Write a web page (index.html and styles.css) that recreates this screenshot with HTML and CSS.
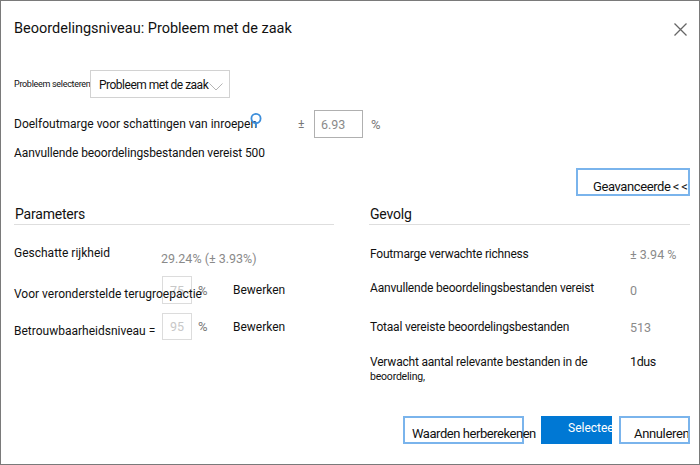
FILE: index.html
```html
<!DOCTYPE html>
<html lang="nl">
<head>
<meta charset="utf-8">
<title>Beoordelingsniveau</title>
<link rel="stylesheet" href="styles.css">
</head>
<body>
<div class="dialog">
  <div class="header">
    <h1 class="title">Beoordelingsniveau: Probleem met de zaak</h1>
    <button class="close" aria-label="Sluiten">
      <svg width="13" height="13" viewBox="0 0 13 13"><path d="M0.5 0.5 L12.5 12.5 M12.5 0.5 L0.5 12.5" stroke="#666" stroke-width="1.3" fill="none"/></svg>
    </button>
  </div>

  <div class="select-row">
    <span class="tiny">Probleem selecteren</span>
    <div class="dropdown">
      <span class="dd-text">Probleem met de zaak</span>
      <svg class="chev" width="14" height="8" viewBox="0 0 14 8"><path d="M0.5 0.5 L7 7 L13.5 0.5" stroke="#b5b5b5" stroke-width="1" fill="none"/></svg>
    </div>
  </div>

  <div class="margin-row">
    <div class="margin-label">
      <span>Doelfoutmarge voor schattingen van inroepen</span>
      <svg class="knob" width="14" height="18" viewBox="0 0 14 18"><circle cx="7" cy="6.5" r="4.6" stroke="#3c8edb" stroke-width="1.8" fill="none"/><path d="M7 11.5 L7 15.5" stroke="#3c8edb" stroke-width="1.8"/></svg>
    </div>
    <span class="pm">±</span>
    <div class="box box-wide">6.93</div>
    <span class="pct">%</span>
  </div>

  <div class="info-row">Aanvullende beoordelingsbestanden vereist 500</div>

  <div class="adv-row">
    <button class="btn-outline adv">Geavanceerde &lt; &lt;</button>
  </div>

  <div class="columns">
    <section class="col">
      <h2 class="col-head">Parameters</h2>
      <div class="prow prow-1">
        <span class="plabel">Geschatte rijkheid</span>
        <span class="pvalue">29.24% (± 3.93%)</span>
      </div>
      <div class="prow prow-2">
        <span class="plabel lift">Voor veronderstelde terugroepactie</span>
        <div class="box box-small">75</div>
        <span class="ppct">%</span>
        <span class="edit">Bewerken</span>
      </div>
      <div class="prow prow-3">
        <span class="plabel lift">Betrouwbaarheidsniveau =</span>
        <div class="box box-small">95</div>
        <span class="ppct">%</span>
        <span class="edit">Bewerken</span>
      </div>
    </section>

    <section class="col">
      <h2 class="col-head">Gevolg</h2>
      <div class="rrow rrow-1">
        <span class="rlabel">Foutmarge verwachte richness</span>
        <span class="rvalue">± 3.94 %</span>
      </div>
      <div class="rrow rrow-2">
        <span class="rlabel">Aanvullende beoordelingsbestanden vereist</span>
        <span class="rvalue low">0</span>
      </div>
      <div class="rrow rrow-3">
        <span class="rlabel">Totaal vereiste beoordelingsbestanden</span>
        <span class="rvalue">513</span>
      </div>
      <div class="rrow rrow-4">
        <div class="rlabel">
          <div>Verwacht aantal relevante bestanden in de</div>
          <div class="small">beoordeling,</div>
        </div>
        <span class="rvalue dark">1dus</span>
      </div>
    </section>
  </div>

  <div class="footer">
    <button class="btn-outline recalc">Waarden herberekenen</button>
    <button class="btn-primary">Selecteer</button>
    <button class="btn-outline cancel">Annuleren</button>
  </div>
</div>
</body>
</html>
```

FILE: styles.css
```css
html, body {
  margin: 0;
  padding: 0;
  background: #fff;
}

.dialog {
  box-sizing: border-box;
  width: 700px;
  height: 465px;
  border: 1px solid #7a7a7a;
  background: #fff;
  font-family: Roboto, "Open Sans", sans-serif;
  font-size: 12px;
  color: #111;
  padding: 0 9px 0 13px;
  display: flex;
  flex-direction: column;
  overflow: hidden;
}

button {
  font-family: inherit;
  margin: 0;
  background: #fff;
  cursor: pointer;
}

.header {
  display: flex;
  align-items: center;
  justify-content: space-between;
  height: 20px;
  margin-top: 18px;
}

.title {
  margin: 0;
  font-size: 14.5px;
  font-weight: 400;
  line-height: 20px;
  color: #111;
}

.close {
  border: none;
  padding: 0;
  width: 13px;
  height: 13px;
  margin-right: 3px;
  display: flex;
}

.select-row {
  display: flex;
  align-items: center;
  margin-top: 31px;
  height: 28px;
}

.tiny {
  font-size: 9px;
  letter-spacing: -0.3px;
  width: 76px;
  white-space: nowrap;
  color: #111;
}

.dropdown {
  box-sizing: border-box;
  width: 140px;
  height: 28px;
  border: 1px solid #d2d2d2;
  display: flex;
  align-items: center;
  padding-left: 8px;
}

.dd-text {
  font-size: 12px;
  letter-spacing: -0.5px;
  white-space: nowrap;
  margin-top: 1px;
}

.chev {
  margin-left: 1px;
  margin-top: 5px;
  flex: 0 0 auto;
}

.margin-row {
  display: flex;
  align-items: center;
  margin-top: 12px;
  height: 28px;
}

.margin-label {
  position: relative;
  width: 284px;
  white-space: nowrap;
}

.knob {
  position: absolute;
  left: 235px;
  top: -5px;
}

.pm {
  width: 16px;
  color: #777;
}

.box {
  box-sizing: border-box;
  border: 1px solid #c4c4c4;
  color: #999;
  display: flex;
  align-items: center;
  background: #fff;
}

.box-wide {
  width: 49px;
  height: 28px;
  padding-left: 6px;
  font-size: 12.5px;
  color: #8a8a8a;
  border-color: #b0b0b0;
}

.pct {
  margin-left: 8px;
  color: #777;
  font-size: 13px;
}

.info-row {
  margin-top: 5px;
  height: 20px;
  line-height: 20px;
  letter-spacing: -0.1px;
}

.adv-row {
  display: flex;
  justify-content: flex-end;
  margin-top: 5px;
}

.btn-outline {
  box-sizing: border-box;
  border: 2px solid #7ab4ec;
  height: 28px;
  font-size: 13px;
  color: #111;
  white-space: nowrap;
  text-align: left;
  overflow: hidden;
}

.adv {
  width: 114px;
  padding: 8px 0 0 15px;
  height: 28px;
  letter-spacing: -0.4px;
  word-spacing: -0.5px;
}

.columns {
  display: flex;
  gap: 35px;
  margin-top: 8px;
}

.col {
  flex: 0 0 auto;
}

.col:first-child {
  width: 320px;
}

.col:last-child {
  width: 321px;
}

.col-head {
  margin: 0;
  font-size: 14px;
  font-weight: 400;
  line-height: 20px;
  padding-left: 1px;
  border-bottom: 1px solid #dedede;
  color: #111;
  letter-spacing: -0.2px;
}

.prow {
  display: flex;
  align-items: center;
  white-space: nowrap;
}

.plabel {
  width: 148px;
  position: relative;
  z-index: 1;
}

.prow-1 {
  margin-top: 18px;
  height: 20px;
}

.pvalue {
  color: #8a8a8a;
  margin-top: 10px;
  margin-left: -1px;
  font-size: 12.5px;
}

.prow-2 {
  margin-top: 13px;
  height: 28px;
}

.prow-3 {
  margin-top: 9px;
  height: 27px;
}

.lift {
  margin-top: 8px;
}

.box-small {
  width: 30px;
  height: 100%;
  justify-content: center;
  color: #c8c8c8;
  border-color: #dcdcdc;
  font-size: 12.5px;
}

.ppct {
  margin-left: 6px;
  color: #777;
  font-size: 13px;
  width: 35px;
}

.edit {
  color: #111;
}

.rrow {
  display: flex;
  align-items: center;
  white-space: nowrap;
}

.rlabel {
  width: 260px;
  padding-left: 1px;
  letter-spacing: -0.2px;
}

.rvalue {
  color: #8a8a8a;
  font-size: 12.5px;
}

.rvalue.low {
  margin-top: 4px;
}

.rvalue.dark {
  color: #111;
  letter-spacing: -0.4px;
}

.rrow-1 {
  margin-top: 19px;
  height: 20px;
}

.rrow-2 {
  margin-top: 14px;
  height: 20px;
}

.rrow-3 {
  margin-top: 19px;
  height: 20px;
}

.rrow-4 {
  margin-top: 15px;
  align-items: flex-start;
  line-height: 20px;
}

.small {
  font-size: 10.5px;
  line-height: 14px;
  margin-top: -2px;
}

.footer {
  margin-top: auto;
  margin-bottom: 20px;
  display: flex;
  justify-content: flex-end;
  height: 28px;
}

.recalc {
  width: 121px;
  padding: 6px 0 0 7px;
  overflow: visible;
  letter-spacing: -0.45px;
}

.btn-primary {
  box-sizing: border-box;
  width: 71px;
  height: 28px;
  margin-left: 17px;
  border: none;
  background: #0078d4;
  color: #fff;
  font-size: 12px;
  text-align: left;
  padding: 0 0 4px 27px;
  white-space: nowrap;
  overflow: hidden;
}

.cancel {
  width: 71px;
  margin-left: 7px;
  padding: 6px 0 0 13px;
  letter-spacing: -0.35px;
}
```
